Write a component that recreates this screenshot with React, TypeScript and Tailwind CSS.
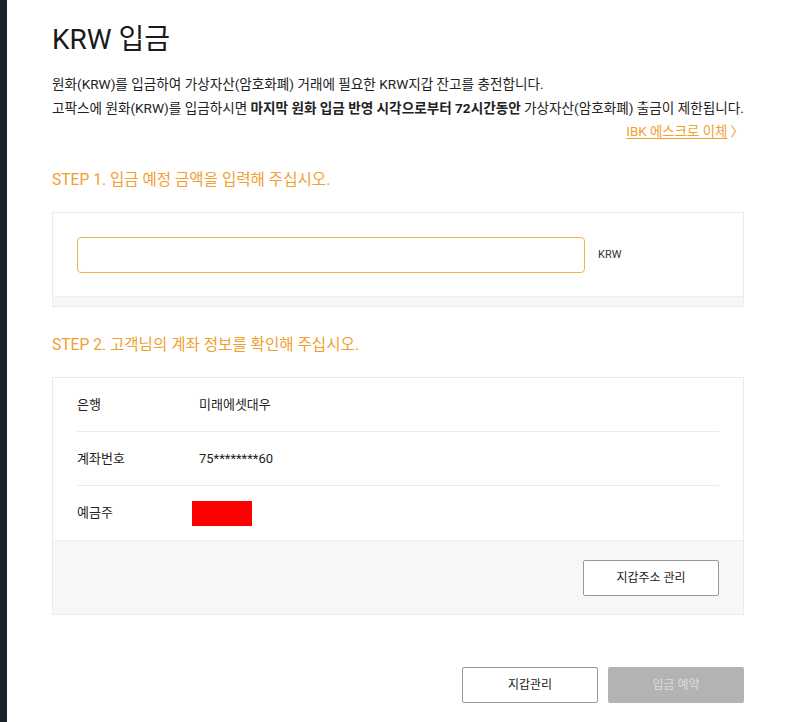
export default function App() {
  const font = { fontFamily: "Roboto, 'Noto Sans CJK KR', sans-serif" };
  const rows = [
    { label: "은행", value: "미래에셋대우" },
    { label: "계좌번호", value: "75********60" },
  ];

  return (
    <div style={font} className="flex min-h-[722px] w-[805px] bg-white text-[#222]">
      <div className="w-[7px] shrink-0 bg-[#1c2029]" />
      <div className="flex w-[737px] flex-col pl-[45px]">
        <h1 className="mt-[20px] text-[28px] font-normal leading-[40px] text-[#1a1a1a]">KRW 입금</h1>

        <div className="mt-[12px] text-[13.6px] leading-[24px] text-[#222]">
          <p>원화(KRW)를 입금하여 가상자산(암호화폐) 거래에 필요한 KRW지갑 잔고를 충전합니다.</p>
          <p className="whitespace-nowrap">
            고팍스에 원화(KRW)를 입금하시면 <b>마지막 원화 입금 반영 시각으로부터 72시간동안</b> 가상자산(암호화폐) 출금이 제한됩니다.
          </p>
          <div className="flex justify-end">
            <a className="text-[13.4px] text-[#f0a030]">
              <span className="underline underline-offset-2">IBK 에스크로 이체</span> 〉
            </a>
          </div>
        </div>

        <h2 className="mt-[25px] text-[15.6px] leading-[22px] text-[#f0a030]">STEP 1. 입금 예정 금액을 입력해 주십시오.</h2>

        <div className="mt-[21px] border border-[#ebebeb]">
          <div className="flex items-center px-[24px] pt-[24px] pb-[23px]">
            <input className="h-[36px] w-[508px] rounded-[4px] border border-[#f3b54a] px-3 text-[13px] outline-none" />
            <span className="ml-[13px] text-[11px] text-[#333]">KRW</span>
          </div>
          <div className="h-[10px] border-t border-[#f0f0f0] bg-[#f7f7f7]" />
        </div>

        <h2 className="mt-[27px] text-[15.6px] leading-[22px] text-[#f0a030]">STEP 2. 고객님의 계좌 정보를 확인해 주십시오.</h2>

        <div className="mt-[21px] border border-[#ebebeb]">
          <div className="px-[24px]">
            {rows.map((r) => (
              <div key={r.label} className="flex h-[54px] items-center border-b border-[#ebebeb] text-[13px]">
                <span className="w-[122px]">{r.label}</span>
                <span>{r.value}</span>
              </div>
            ))}
            <div className="flex h-[54px] items-center text-[13px]">
              <span className="w-[115px]">예금주</span>
              <span className="h-[25px] w-[60px] bg-[#ff0000]" />
            </div>
          </div>
          <div className="flex h-[74px] items-center justify-end border-t border-[#f0f0f0] bg-[#f7f7f7] px-[24px]">
            <button className="h-[36px] w-[136px] rounded-[2px] border border-[#999] bg-white text-[12px] text-[#222]">
              지갑주소 관리
            </button>
          </div>
        </div>

        <div className="mt-[52px] flex justify-end gap-[10px]">
          <button className="h-[36px] w-[136px] rounded-[2px] border border-[#999] bg-white text-[12px] text-[#222]">
            지갑관리
          </button>
          <button className="h-[36px] w-[136px] rounded-[2px] bg-[#b3b3b3] text-[12px] text-[#dcdcdc]">
            입금 예약
          </button>
        </div>
      </div>
    </div>
  );
}
